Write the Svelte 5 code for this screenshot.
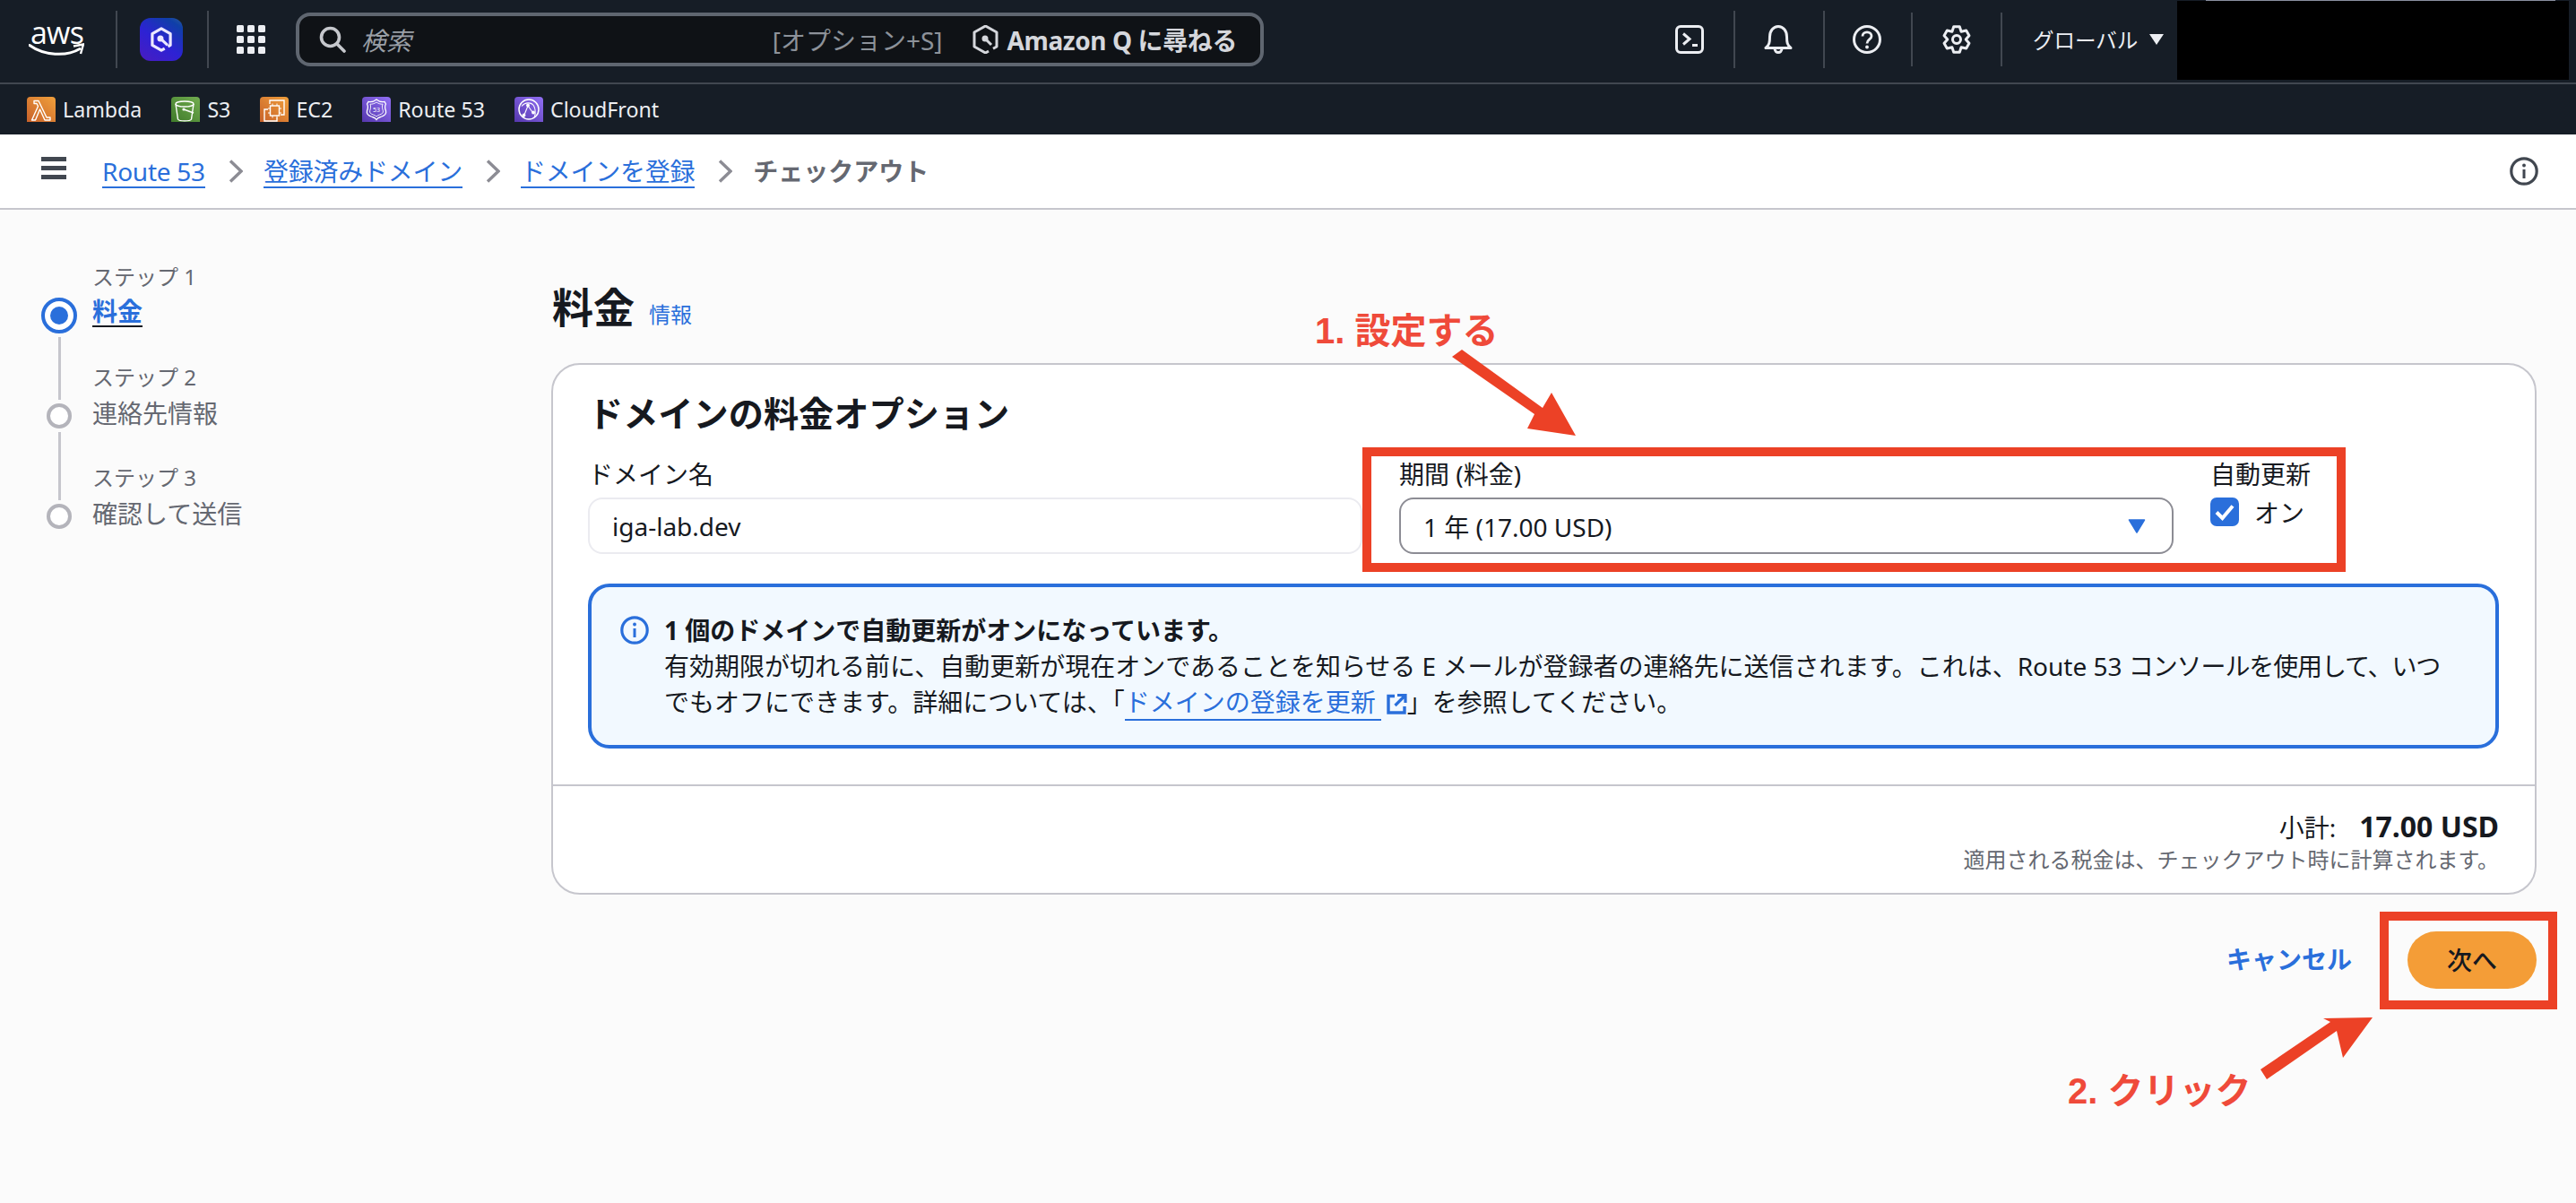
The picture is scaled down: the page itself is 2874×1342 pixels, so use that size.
<script>
  const services = [
    { name: 'Lambda', kind: 'lambda' },
    { name: 'S3', kind: 's3' },
    { name: 'EC2', kind: 'ec2' },
    { name: 'Route 53', kind: 'r53' },
    { name: 'CloudFront', kind: 'cf' }
  ];
  const crumbs = ['Route 53', '登録済みドメイン', 'ドメインを登録'];

  function gearPoints() {
    const pts = [];
    for (let i = 0; i < 6; i++) {
      const a = -90 + i * 60;
      [[-30, 10.2], [-13, 14.6], [13, 14.6], [30, 10.2]].forEach(([d, r]) => {
        const t = ((a + d) * Math.PI) / 180;
        pts.push(`${(16 + r * Math.cos(t)).toFixed(2)},${(16 + r * Math.sin(t)).toFixed(2)}`);
      });
    }
    return pts.join(' ');
  }
  const gear = gearPoints();
</script>

<div class="page">
  <header class="topbar">
    <div class="aws">
      <span class="aws-word">aws</span>
      <svg class="smile" viewBox="0 0 62 16" aria-hidden="true">
        <path d="M1 2.500C17 14 42 15.500 57 6.500" fill="none" stroke="#fff" stroke-width="3" stroke-linecap="round"/>
        <path d="M50 3.500L61 1.500L58 12" fill="none" stroke="#fff" stroke-width="2.400"/>
      </svg>
    </div>
    <span class="sep first"></span>
    <div class="qapp">
      <svg viewBox="0 0 32 32" class="hex" aria-hidden="true">
        <path d="M19.500 25.500L16 27.500L6.500 22V10L16 4.500L25.500 10V22L23 23.400" fill="none" stroke="#ece8ff" stroke-width="3" stroke-linejoin="round"/>
        <circle cx="15" cy="15" r="3.300" fill="#ece8ff"/>
        <path d="M15 15L22.500 22" stroke="#ece8ff" stroke-width="3"/>
      </svg>
    </div>
    <span class="sep second"></span>
    <svg class="grid-ico" viewBox="0 0 32 32" aria-hidden="true">
      {#each [0, 12, 24] as y}
        {#each [0, 12, 24] as x}
          <rect x={x} y={y} width="8" height="8" rx="1.500" fill="#eceef2"/>
        {/each}
      {/each}
    </svg>

    <div class="search">
      <svg class="search-ico" viewBox="0 0 30 30" aria-hidden="true">
        <circle cx="12.500" cy="12.500" r="10" fill="none" stroke="#c6c8cd" stroke-width="3.600"/>
        <path d="M20 20L28 28" stroke="#c6c8cd" stroke-width="3.600" stroke-linecap="round"/>
      </svg>
      <span class="placeholder">検索</span>
      <span class="shortcut">[オプション+S]</span>
      <svg class="q-small" viewBox="0 0 29 32" aria-hidden="true">
        <path d="M18 29L14.500 31L2 24V8L14.500 1L27 8V24L23 26.300" fill="none" stroke="#d5d7dc" stroke-width="3" stroke-linejoin="round"/>
        <circle cx="14" cy="15" r="3.500" fill="#d5d7dc"/>
        <path d="M14 15L21 22" stroke="#d5d7dc" stroke-width="3"/>
      </svg>
      <span class="ask">Amazon Q に尋ねる</span>
    </div>

    <svg class="t-ico term" viewBox="0 0 32 32" aria-hidden="true">
      <rect x="1.500" y="1.500" width="29" height="29" rx="4.500" fill="none" stroke="#eceef2" stroke-width="3"/>
      <path d="M9 9.500L16 15.500L9 21.500" fill="none" stroke="#eceef2" stroke-width="3"/>
      <path d="M19 22.500H25" stroke="#eceef2" stroke-width="3"/>
    </svg>
    <span class="sep r1"></span>
    <svg class="t-ico bell" viewBox="0 0 32 32" aria-hidden="true">
      <path d="M2 25.500H30C26 22.500 25.500 19 25.500 13C25.500 6.500 21.500 1.500 16 1.500C10.500 1.500 6.500 6.500 6.500 13C6.500 19 6 22.500 2 25.500Z" fill="none" stroke="#eceef2" stroke-width="3" stroke-linejoin="round"/>
      <path d="M12 26C12 29 14 30.500 16 30.500C18 30.500 20 29 20 26" fill="none" stroke="#eceef2" stroke-width="3"/>
    </svg>
    <span class="sep r2"></span>
    <svg class="t-ico help" viewBox="0 0 32 32" aria-hidden="true">
      <circle cx="16" cy="16" r="14.500" fill="none" stroke="#eceef2" stroke-width="3"/>
      <path d="M11 12.500C11 9.500 13.300 7.800 16 7.800C18.800 7.800 21 9.700 21 12.300C21 16 16 16 16 20.500" fill="none" stroke="#eceef2" stroke-width="2.800"/>
      <circle cx="16" cy="24.500" r="1.900" fill="#eceef2"/>
    </svg>
    <span class="sep r3"></span>
    <svg class="t-ico gear" viewBox="0 0 32 32" aria-hidden="true">
      <polygon points={gear} fill="none" stroke="#eceef2" stroke-width="3" stroke-linejoin="round"/>
      <circle cx="16" cy="16" r="4.500" fill="none" stroke="#eceef2" stroke-width="3"/>
    </svg>
    <span class="sep r4"></span>
    <span class="region">グローバル</span>
    <svg class="region-caret" viewBox="0 0 18 14" aria-hidden="true"><path d="M1 1H17L9 13Z" fill="#eceef2"/></svg>
    <div class="redact"></div>
  </header>

  <nav class="favs">
    {#each services as s}
      <div class="fav">
        <svg class="svc {s.kind}" viewBox="0 0 32 28" aria-hidden="true">
          {#if s.kind === 'lambda'}
            <path d="M8 4.500H13L22 23H26V26H20L14.500 14L9.500 26H5.500L12.500 10.500L11 7.500H8Z" fill="none" stroke="#fff" stroke-width="1.400" stroke-linejoin="round"/>
          {:else if s.kind === 's3'}
            <ellipse cx="15" cy="8" rx="10" ry="3" fill="none" stroke="#fff" stroke-width="1.400"/>
            <path d="M5 8L7.500 25C9 27.500 21 27.500 22.500 25L25 8" fill="none" stroke="#fff" stroke-width="1.400"/>
            <path d="M14 14L25 18" stroke="#fff" stroke-width="1.400"/>
            <circle cx="14" cy="14" r="1.600" fill="#fff"/>
          {:else if s.kind === 'ec2'}
            <path d="M11 8V4H27V20H23" fill="none" stroke="#fff" stroke-width="1.400"/>
            <path d="M9 14H5V27H19V23" fill="none" stroke="#fff" stroke-width="1.400"/>
            <rect x="11.500" y="10" width="10" height="11" fill="none" stroke="#fff" stroke-width="1.400"/>
            <path d="M14 7.500V10M19 7.500V10M14 21V23.500M19 21V23.500M9 13H11.500M9 18H11.500M21.500 13H24M21.500 18H24" stroke="#fff" stroke-width="1"/>
          {:else if s.kind === 'r53'}
            <path d="M16 3C13 5.500 9.500 6 7 5.500L5.500 8C7 10.500 6.500 13 5.500 15.500C4.500 19.500 8 21.500 11.500 22.500C13.500 23 15 24 16 25.500C17 24 18.500 23 20.500 22.500C24 21.500 27.500 19.500 26.500 15.500C25.500 13 25 10.500 26.500 8L25 5.500C22.500 6 19 5.500 16 3Z" fill="none" stroke="#fff" stroke-width="1.300"/>
            <path d="M16 6C13.500 7.800 11 8.300 9 8.200C10 10.500 9.500 13 8.700 15.500C8 18 10 19.200 12.500 20C14 20.400 15.200 21 16 22C16.800 21 18 20.400 19.500 20C22 19.200 24 18 23.300 15.500C22.500 13 22 10.500 23 8.200C21 8.300 18.500 7.800 16 6Z" fill="none" stroke="#fff" stroke-width="0.900"/>
            <text x="16" y="17" text-anchor="middle" class="r53t">53</text>
          {:else}
            <circle cx="16" cy="14" r="11" fill="none" stroke="#fff" stroke-width="1.500"/>
            <path d="M8 10.500C12 5.500 19 6 21.500 10C23.500 13.500 23.500 18 22.500 22" fill="none" stroke="#fff" stroke-width="1.100"/>
            <path d="M15 10L11 20M15 10L20 17" fill="none" stroke="#fff" stroke-width="1.100"/>
            <circle cx="15" cy="9.500" r="1.900" fill="#fff"/>
            <circle cx="10.500" cy="20.500" r="1.900" fill="#fff"/>
            <circle cx="21" cy="17.500" r="1.900" fill="#fff"/>
          {/if}
        </svg>
        <span>{s.name}</span>
      </div>
    {/each}
  </nav>

  <div class="crumbbar">
    <div class="burger"><i></i><i></i><i></i></div>
    {#each crumbs as c}
      <a class="crumb" href="#top">{c}</a>
      <svg class="chev" viewBox="0 0 16 26" aria-hidden="true"><path d="M2 1.500L14 13L2 24.500" fill="none" stroke="#8c8c94" stroke-width="3.400"/></svg>
    {/each}
    <span class="current">チェックアウト</span>
    <svg class="bar-info" viewBox="0 0 32 32" aria-hidden="true">
      <circle cx="16" cy="16" r="14.200" fill="none" stroke="#414750" stroke-width="3.200"/>
      <path d="M16 14V24" stroke="#414750" stroke-width="3"/>
      <circle cx="16" cy="9.500" r="1.900" fill="#414750"/>
    </svg>
  </div>

  <main class="main">
    <aside class="wizard">
      <div class="rail">
        <span class="dot active"><b></b></span>
        <span class="line l1"></span>
        <span class="dot"></span>
        <span class="line l2"></span>
        <span class="dot"></span>
      </div>
      <ol class="steps">
        <li><small>ステップ 1</small><a href="#top" class="step-now">料金</a></li>
        <li><small>ステップ 2</small><span>連絡先情報</span></li>
        <li><small>ステップ 3</small><span>確認して送信</span></li>
      </ol>
    </aside>

    <section class="content">
      <div class="title-row">
        <h1>料金</h1>
        <a href="#top" class="info-link">情報</a>
      </div>

      <div class="card">
        <div class="card-body">
          <h2>ドメインの料金オプション</h2>
          <div class="fields">
            <div class="field">
              <div class="flabel">ドメイン名</div>
              <div class="input">iga-lab.dev</div>
            </div>
            <div class="field">
              <div class="flabel">期間 (料金)</div>
              <div class="input select">
                <span>1 年 (17.00 USD)</span>
                <svg class="caret" viewBox="0 0 20 16" aria-hidden="true"><path d="M1.500 1H18.500L10 15Z" fill="#2a6fdb" stroke="#2a6fdb" stroke-width="1.500" stroke-linejoin="round"/></svg>
              </div>
            </div>
            <div class="renew">
              <div class="flabel">自動更新</div>
              <div class="check-row">
                <span class="check">
                  <svg viewBox="0 0 32 32" aria-hidden="true"><path d="M7 16.500L13.500 23L25 9.500" fill="none" stroke="#fff" stroke-width="4"/></svg>
                </span>
                <span>オン</span>
              </div>
            </div>
          </div>

          <div class="alert">
            <svg class="alert-ico" viewBox="0 0 32 32" aria-hidden="true">
              <circle cx="16" cy="16" r="14.200" fill="none" stroke="#2a6fdb" stroke-width="3.200"/>
              <path d="M16 14V24" stroke="#2a6fdb" stroke-width="3"/>
              <circle cx="16" cy="9.500" r="1.900" fill="#2a6fdb"/>
            </svg>
            <div class="alert-text">
              <strong>1 個のドメインで自動更新がオンになっています。</strong><br />
              有効期限が切れる前に、自動更新が現在オンであることを知らせる E メールが登録者の連絡先に送信されます。これは、Route 53 <span class="tight">コンソールを使用して、いつ</span><br />
              でもオフにできます。詳細については、「<a href="#top" class="ext">ドメインの登録を更新</a><svg class="ext-ico" viewBox="0 0 24 24" aria-hidden="true"><path d="M10 3.500H3V22H21V15" fill="none" stroke="#2a6fdb" stroke-width="3.400"/><path d="M13 2.500H22V11M21.500 3L10.500 14" fill="none" stroke="#2a6fdb" stroke-width="3.200"/></svg>」を参照してください。
            </div>
          </div>
        </div>

        <div class="card-foot">
          <div class="subtotal"><span>小計:</span><strong>17.00 USD</strong></div>
          <div class="tax">適用される税金は、チェックアウト時に計算されます。</div>
        </div>
      </div>

      <div class="actions">
        <a href="#top" class="cancel">キャンセル</a>
        <button class="next" type="button">次へ</button>
      </div>
    </section>
  </main>

  <div class="mark box1"></div>
  <div class="mark box2"></div>
  <svg class="arrows" viewBox="0 0 2874 1342" aria-hidden="true">
    <path d="M1620 398L1631 390L1721 455L1731 438L1758 486L1704 478L1712 462Z" fill="#ec4126"/>
    <path d="M2522 1193L2529 1204L2607 1150L2614 1180L2647 1135L2592 1136L2600 1140Z" fill="#ec4126"/>
  </svg>
  <div class="note n1">1. 設定する</div>
  <div class="note n2">2. クリック</div>
</div>

<style>
  :global(body) {
    margin: 0;
    background: #fbfbfb;
    font-family: "Noto Sans", "Noto Sans CJK JP", sans-serif;
    color: #16191f;
  }
  .page {
    position: relative;
    width: 2874px;
    min-height: 1342px;
    overflow: hidden;
  }
  a { text-decoration: none; color: #2a6fdb; }

  .topbar {
    height: 88px;
    padding-bottom: 4px;
    background: #161d26;
    border-bottom: 2px solid #414750;
    display: flex;
    align-items: center;
    padding-left: 32px;
    color: #eceef2;
  }
  .aws {
    width: 62px;
    height: 40px;
    position: relative;
    flex: none;
  }
  .aws-word {
    position: absolute;
    left: 2px;
    top: -8px;
    font-family: "Open Sans", sans-serif;
    font-size: 34px;
    line-height: 40px;
    letter-spacing: -0.8px;
    color: #fff;
  }
  .smile {
    position: absolute;
    left: 0;
    top: 24px;
    width: 62px;
    height: 16px;
  }
  .sep {
    width: 2px;
    height: 64px;
    background: #414750;
    flex: none;
  }
  .sep.first { margin-left: 35px; }
  .qapp {
    width: 48px;
    height: 48px;
    margin-left: 25px;
    border-radius: 12px;
    flex: none;
    background: linear-gradient(35deg, #4a1cc0 0%, #2d22d4 45%, #0f3fa8 85%, #2a5a9a 100%);
    display: flex;
    align-items: center;
    justify-content: center;
  }
  .hex { width: 34px; height: 34px; }
  .sep.second { margin-left: 27px; }
  .grid-ico { width: 32px; height: 32px; margin-left: 31px; flex: none; }
  .search {
    box-sizing: border-box;
    width: 1080px;
    height: 60px;
    margin-left: 34px;
    flex: none;
    border: 4px solid #5f6670;
    border-radius: 16px;
    background: #0f1216;
    display: flex;
    align-items: center;
    padding: 0 26px 0 22px;
  }
  .search-ico { width: 30px; height: 30px; flex: none; }
  .placeholder {
    margin-left: 17px;
    font-size: 28px;
    font-style: italic;
    color: #9a9fa6;
  }
  .shortcut {
    margin-left: auto;
    font-size: 28px;
    color: #8d929a;
    white-space: nowrap;
  }
  .q-small { width: 29px; height: 32px; margin-left: 33px; flex: none; }
  .ask {
    margin-left: 10px;
    font-size: 28px;
    font-weight: 700;
    letter-spacing: -0.4px;
    color: #d5d7dc;
    white-space: nowrap;
  }
  .t-ico { width: 32px; height: 32px; flex: none; }
  .term { margin-left: 459px; }
  .sep.r1 { margin-left: 33px; }
  .bell { margin-left: 32px; }
  .sep.r2 { margin-left: 34px; }
  .help { margin-left: 31px; }
  .sep.r3 { margin-left: 33px; height: 60px; }
  .gear { margin-left: 33px; }
  .sep.r4 { margin-left: 33px; height: 60px; }
  .region {
    margin-left: 34px;
    font-size: 23.5px;
    color: #eceef2;
    white-space: nowrap;
  }
  .region-caret { width: 18px; height: 14px; margin-left: 12px; flex: none; }
  .redact {
    position: relative;
    width: 437px;
    height: 88px;
    margin-left: 14px;
    background: #000;
    flex: none;
    align-self: flex-start;
    margin-top: 1px;
  }
  .redact::before {
    content: "";
    position: absolute;
    left: 32px;
    right: 15px;
    top: -1px;
    height: 1px;
    background: #8a90a0;
  }

  .favs {
    height: 56px;
    background: #161d26;
    display: flex;
    align-items: center;
    padding-left: 30px;
    gap: 33px;
  }
  .fav {
    display: flex;
    align-items: center;
    gap: 8px;
    font-size: 23.2px;
    color: #eceef2;
    white-space: nowrap;
  }
  .svc { width: 32px; height: 28px; flex: none; border-radius: 4px 4px 0 0; }
  .lambda, .ec2 { background: linear-gradient(40deg, #c8612a, #f0a03c); }
  .s3 { background: linear-gradient(40deg, #3f7a2a, #72ad50); }
  .r53, .cf { background: linear-gradient(40deg, #5537ad, #9270f5); }
  .r53t { font-size: 7px; fill: #fff; font-family: "Noto Sans", sans-serif; }

  .crumbbar {
    height: 82px;
    background: #fff;
    border-bottom: 2px solid #c6c6cd;
    display: flex;
    align-items: center;
    padding-left: 46px;
    position: relative;
    font-size: 28px;
  }
  .burger {
    width: 28px;
    margin-right: 40px;
    margin-top: -8px;
    display: flex;
    flex-direction: column;
    gap: 5px;
    flex: none;
  }
  .burger i { display: block; height: 5px; background: #414750; }
  .crumb {
    white-space: nowrap;
    border-bottom: 2px solid #2a6fdb;
    line-height: 34px;
    margin-top: 2px;
    letter-spacing: -0.25px;
  }
  .chev { width: 16px; height: 26px; margin: 0 23px 0 26px; flex: none; }
  .current { font-weight: 700; color: #656871; white-space: nowrap; margin-bottom: 2px; }
  .bar-info { width: 32px; height: 32px; margin-left: auto; margin-right: 42px; flex: none; }

  .main { display: flex; }
  .wizard {
    width: 615px;
    flex: none;
    display: flex;
    padding-left: 46px;
    box-sizing: border-box;
  }
  .rail {
    width: 40px;
    padding-top: 98px;
    display: flex;
    flex-direction: column;
    align-items: center;
    flex: none;
  }
  .dot {
    box-sizing: border-box;
    width: 28px;
    height: 28px;
    border: 4px solid #b4b4bb;
    border-radius: 50%;
    flex: none;
    background: #fff;
  }
  .dot.active {
    width: 40px;
    height: 40px;
    border: 4px solid #2a6fdb;
    display: flex;
    align-items: center;
    justify-content: center;
  }
  .dot.active b { width: 20px; height: 20px; border-radius: 50%; background: #2a6fdb; }
  .line { width: 3px; background: #c6c6cd; margin: 4px 0; flex: none; }
  .l1 { height: 70px; }
  .l2 { height: 76px; }
  .steps {
    list-style: none;
    margin: 0 0 0 17px;
    padding: 59px 0 0;
  }
  .steps li { height: 112px; display: flex; flex-direction: column; align-items: flex-start; }
  .steps small { font-size: 24px; line-height: 32px; color: #656871; margin-bottom: 4px; }
  .steps span { font-size: 28px; line-height: 40px; color: #656871; }
  .step-now {
    font-size: 28px;
    line-height: 32px;
    margin-top: 2px;
    font-weight: 700;
    border-bottom: 2px solid #16191f;
  }

  .content { width: 2215px; flex: none; padding-top: 78px; }
  .title-row { display: flex; align-items: baseline; gap: 16px; height: 60px; margin-bottom: 33px; padding-left: 1px; }
  h1 { margin: 0; font-size: 46px; line-height: 60px; font-weight: 700; }
  .info-link { font-size: 24px; }

  .card {
    box-sizing: border-box;
    height: 593px;
    background: #fff;
    border: 2px solid #c6c6cd;
    border-radius: 32px;
    overflow: hidden;
  }
  .card-body {
    box-sizing: border-box;
    height: 470px;
    border-bottom: 2px solid #c6c6cd;
    padding: 29px 40px 0 39px;
  }
  h2 { margin: 0 0 25px; font-size: 39.2px; line-height: 50px; font-weight: 700; }
  .fields { display: flex; gap: 41px; }
  .field { width: 864px; flex: none; }
  .flabel { font-size: 28px; line-height: 36px; margin-bottom: 8px; white-space: nowrap; }
  .input {
    box-sizing: border-box;
    height: 63px;
    border: 2px solid #ebebf0;
    border-radius: 16px;
    padding: 0 25px;
    display: flex;
    align-items: center;
    font-size: 28px;
  }
  .select {
    border-color: #8c8c94;
    justify-content: space-between;
    padding-right: 29px;
  }
  .caret { width: 20px; height: 16px; }
  .check-row { display: flex; align-items: center; gap: 17px; font-size: 28px; margin-top: 4px; height: 32px; }
  .check {
    width: 32px;
    height: 32px;
    background: #2a6fdb;
    border-radius: 7px;
    flex: none;
    display: block;
  }
  .check svg { display: block; }

  .alert {
    box-sizing: border-box;
    height: 184px;
    margin-top: 33px;
    background: #f2f9ff;
    border: 4px solid #2a6fdb;
    border-radius: 24px;
    padding: 28px 32px;
    display: flex;
    gap: 17px;
  }
  .alert-ico { width: 32px; height: 32px; margin-top: 4px; flex: none; }
  .alert-text { font-size: 28px; line-height: 40px; white-space: nowrap; }
  .alert-text strong { font-weight: 700; }
  .tight { letter-spacing: -1.1px; }
  .ext { border-bottom: 2px solid #2a6fdb; padding-right: 6px; }
  .ext-ico { width: 24px; height: 24px; vertical-align: -3px; margin-left: 5px; }

  .card-foot { padding: 25px 40px 0 0; text-align: right; }
  .subtotal { font-size: 28px; line-height: 40px; display: flex; justify-content: flex-end; align-items: baseline; gap: 26px; }
  .subtotal strong { font-size: 32px; font-weight: 700; }
  .tax { font-size: 24px; line-height: 32px; color: #656871; }

  .actions {
    display: flex;
    justify-content: flex-end;
    align-items: center;
    gap: 62px;
    margin-top: 41px;
  }
  .cancel { font-size: 28px; font-weight: 700; margin-bottom: 4px; }
  .next {
    width: 144px;
    height: 64px;
    border: 0;
    border-radius: 32px;
    background: #f49d37;
    color: #16191f;
    font-family: inherit;
    font-size: 28px;
    font-weight: 500;
    padding: 0 0 2px;
  }

  .mark {
    position: absolute;
    box-sizing: border-box;
    border: 10px solid #ec4126;
  }
  .box1 { left: 1520px; top: 499px; width: 1097px; height: 139px; }
  .box2 { left: 2655px; top: 1017px; width: 198px; height: 109px; }
  .arrows { position: absolute; left: 0; top: 0; width: 2874px; height: 1342px; pointer-events: none; }
  .note {
    position: absolute;
    font-family: "Liberation Sans", "Noto Sans CJK JP", sans-serif;
    font-size: 40px;
    line-height: 46px;
    font-weight: 700;
    color: #ef4a3a;
    white-space: nowrap;
  }
  .n1 { left: 1467px; top: 346px; }
  .n2 { left: 2307px; top: 1194px; }
</style>
